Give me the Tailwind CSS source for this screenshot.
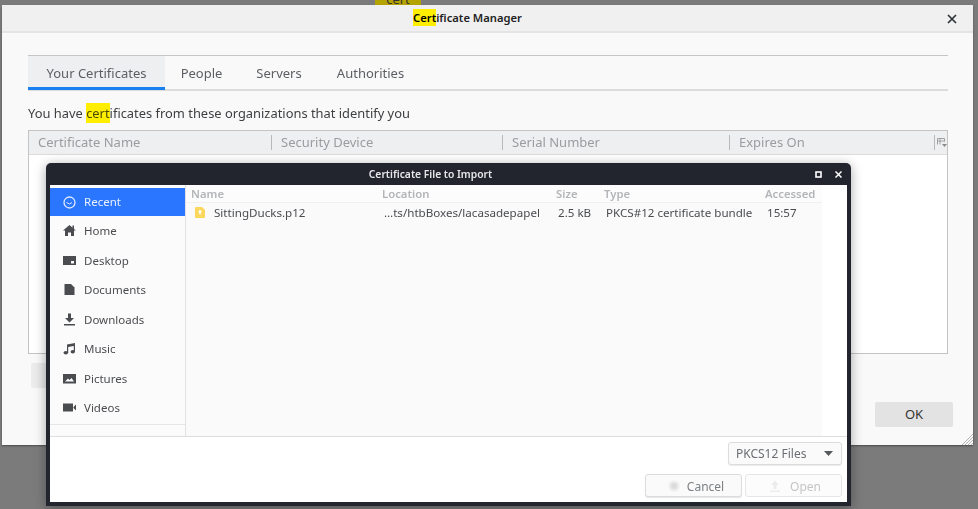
<!DOCTYPE html>
<html lang="en">
<head>
  <meta charset="UTF-8">
  <title>Certificate Manager</title>
  <script src="https://cdn.jsdelivr.net/npm/@tailwindcss/browser@4"></script>
</head>
<body class="relative w-[978px] h-[509px] overflow-hidden bg-[#7b7b7b] font-['Noto_Sans',sans-serif] text-[13px] text-[#3d3f42] blur-[0.35px]">
  <!-- window behind the manager -->
  <div class="absolute left-[375px] top-[-14px] w-[46px] h-[19px] bg-[#b5a400] text-center text-[#333] leading-[27px] overflow-hidden">cert</div>

  <!-- Certificate Manager -->
  <div class="absolute left-[2px] top-[5px] w-[971px] h-[440px] flex flex-col bg-[#f9f9f9] rounded-t-[3px] shadow-[0_1px_2px_rgba(0,0,0,0.4)]">
    <div class="relative h-[28px] shrink-0 flex items-center justify-center pr-[40px] bg-[#f0f0f0] border-b-2 border-[#e4e4e4] font-semibold text-[11.2px] text-[#222]">
      <span><span class="bg-[#ffee00] text-black py-[1px]">Cert</span>ificate Manager</span>
      <svg class="absolute right-[16px] top-[9px] w-[10px] h-[10px]" viewBox="0 0 10 10"><path d="M1 1l8 8M9 1l-8 8" stroke="#2e3436" stroke-width="1.7"/></svg>
    </div>
    <div class="flex-1 flex flex-col pt-[22px] pl-[26px] pr-[25px] relative">
      <div class="flex h-[36px] border-y border-y-[#c6c6c6] border-b-2 border-b-[#dcdcdc] text-[#5b5e63]">
        <div class="w-[137px] h-[34px] flex items-center justify-center pt-[5px] bg-[#eeeff1] border-b-[3px] border-[#1a7ff0]">Your Certificates</div>
        <div class="w-[74px] flex items-center justify-center pt-[3px] pl-[1px] ml-[-1px]">People</div>
        <div class="w-[82px] flex items-center justify-center pt-[3px]">Servers</div>
        <div class="w-[104px] flex items-center justify-center pt-[3px] pr-[1px] ml-[-1px]">Authorities</div>
      </div>
      <p class="mt-[13px] h-[18px] leading-[18px] text-[12.9px]">You have <span class="bg-[#ffee00] text-[#4a4a00] py-[1px]">cert</span>ificates from these organizations that identify you</p>
      <div class="mt-[8px] h-[224px] border border-[#c4c4c4] bg-white">
        <div class="flex h-[24px] items-center bg-[#eeeff0] border-b border-[#dcdcdc] text-[#9a9c9f]">
          <div class="w-[243px] h-[15px] flex items-center pl-[9px] border-r border-[#b8b8b8]">Certificate Name</div>
          <div class="w-[231px] h-[15px] flex items-center pl-[9px] border-r border-[#b8b8b8]">Security Device</div>
          <div class="w-[227px] h-[15px] flex items-center pl-[9px] border-r border-[#b8b8b8]">Serial Number</div>
          <div class="w-[205px] h-[15px] flex items-center pl-[9px] border-r border-[#b8b8b8]">Expires On</div>
          <svg class="ml-[2px] w-[10px] h-[9px]" viewBox="0 0 10 9"><path d="M.5 6.500v-6h7v3M.5 3h7M3 .5v6" fill="none" stroke="#a0a0a0"/><path d="M5 6h5L7.500 9z" fill="#8a8a8a"/></svg>
        </div>
      </div>
      <div class="flex justify-between mt-[9px] items-start">
        <div class="ml-[3px] w-[60px] h-[25px] bg-gradient-to-r from-[#ededed] to-[#d8d8d8] rounded-[2px]"></div>
      </div>
      <div class="absolute right-[20px] top-[369px] w-[78px] h-[25px] flex items-center justify-center bg-[#e3e3e3] rounded-[2px] text-[#333]">OK</div>
    </div>
    <svg class="absolute right-0 bottom-0 w-[11px] h-[11px]" viewBox="0 0 11 11"><path d="M0 11L11 0M3 11l8-8M6 11l5-5M9 11l2-2" stroke="#b5b5b5" stroke-width="1"/></svg>
  </div>

  <!-- File chooser dialog -->
  <div class="absolute left-[46px] top-[163px] w-[805px] h-[343px] flex flex-col bg-[#22252e] rounded-t-[5px] px-[4px] pb-[4px] shadow-[0_2px_12px_rgba(0,0,0,0.35)]">
    <div class="relative h-[22px] shrink-0 flex items-center justify-center pt-[1px] pr-[36px] text-[10.3px] font-semibold text-[#e6e7e9]">
      Certificate File to Import
      <svg class="absolute right-[25px] top-[8px] w-[7px] h-[7px]" viewBox="0 0 7 7"><rect x="1" y="1" width="5" height="5" fill="none" stroke="#fff" stroke-width="1.6"/></svg>
      <svg class="absolute right-[5px] top-[8px] w-[7px] h-[7px]" viewBox="0 0 7 7"><path d="M.5.5l6 6M6.500.5l-6 6" stroke="#fff" stroke-width="1.500"/></svg>
    </div>
    <div class="flex-1 flex flex-col bg-white">
      <div class="h-[252px] flex border-b border-[#dedede]">
        <!-- places sidebar -->
        <div class="w-[136px] shrink-0 flex flex-col bg-[#fbfbfb] border-r border-[#e2e2e2] text-[11.5px] text-[#4a4c50]">
          <div class="h-[240px] pt-[3px] border-b border-[#e6e6e6]">
            <div class="h-[28px] flex items-center gap-[8px] pl-[13px] bg-[#2a76ff] text-[#e8f0ff] w-[135px]">
              <svg class="w-[13px] h-[13px]" viewBox="0 0 13 13"><circle cx="6.500" cy="6.500" r="5.500" fill="none" stroke="#dfe9ff" stroke-width="1.300"/><path d="M3.500 6.500l3 1.500 2.500-1.500" fill="none" stroke="#dfe9ff"/></svg>
              Recent
            </div>
            <div class="h-[29.5px] flex items-center gap-[8px] pl-[13px]">
              <svg class="w-[13px] h-[13px]" viewBox="0 0 13 13"><path d="M6.500 1L9.500 3.700V1.500h1.500v3.500l2 1.500h-2V12H8V8.500H5V12H2V6.500H0z" fill="#4a4c50"/></svg>
              Home
            </div>
            <div class="h-[29.5px] flex items-center gap-[8px] pl-[13px]">
              <svg class="w-[13px] h-[13px]" viewBox="0 0 13 13"><path d="M0 2h13v9H0z M8 7v2.500h3V7z" fill="#4a4c50" fill-rule="evenodd"/></svg>
              Desktop
            </div>
            <div class="h-[29.5px] flex items-center gap-[8px] pl-[13px]">
              <svg class="w-[13px] h-[13px]" viewBox="0 0 13 13"><path d="M1.500 1h6.500l3.500 3.500V12h-10z" fill="#4a4c50"/></svg>
              Documents
            </div>
            <div class="h-[29.5px] flex items-center gap-[8px] pl-[13px]">
              <svg class="w-[13px] h-[13px]" viewBox="0 0 13 13"><path d="M5 .5h3V5h3L6.500 9.500 2 5h3zM1 11h11v1.500H1z" fill="#4a4c50"/></svg>
              Downloads
            </div>
            <div class="h-[29.5px] flex items-center gap-[8px] pl-[13px]">
              <svg class="w-[13px] h-[13px]" viewBox="0 0 13 13"><path d="M4 2.500L12 1v8.500h-1.200V4L5.200 5v6H4z" fill="#4a4c50"/><ellipse cx="2.800" cy="10.800" rx="2.300" ry="1.700" fill="#4a4c50"/><ellipse cx="9.800" cy="9.800" rx="2.200" ry="1.700" fill="#4a4c50"/></svg>
              Music
            </div>
            <div class="h-[29.5px] flex items-center gap-[8px] pl-[13px]">
              <svg class="w-[13px] h-[13px]" viewBox="0 0 13 13"><path d="M0 2h13v9.500H0z M2 9.500h9L8.500 6 6.500 8 5 6.500z" fill="#4a4c50" fill-rule="evenodd"/></svg>
              Pictures
            </div>
            <div class="h-[29.5px] flex items-center gap-[8px] pl-[13px]">
              <svg class="w-[13px] h-[13px]" viewBox="0 0 13 13"><path d="M0 2.500h10v8H0zM10.500 6L13 3.500v6L10.500 7z" fill="#4a4c50"/></svg>
              Videos
            </div>
          </div>
        </div>
        <!-- file list -->
        <div class="w-[636px] bg-[#fafafa] text-[11.6px]">
          <div class="flex h-[18px] pt-[1px] items-center bg-[#fcfcfc] border-b border-[#f0f0f0] text-[#b3b5b8] font-semibold text-[11.3px]">
            <div class="w-[196px] pl-[5px]">Name</div>
            <div class="w-[174px]">Location</div>
            <div class="w-[48px]">Size</div>
            <div class="w-[161px]">Type</div>
            <div>Accessed</div>
          </div>
          <div class="flex h-[20px] items-center text-[#4a4c50]">
            <div class="w-[198px] pl-[9px] flex items-center gap-[9px]">
              <svg class="w-[10px] h-[11px]" viewBox="0 0 10 11"><path d="M1 0h6l3 3v7a1 1 0 0 1-1 1H1a1 1 0 0 1-1-1V1a1 1 0 0 1 1-1z" fill="#fbd75b"/><circle cx="5" cy="4.500" r="1.500" fill="#fff"/><rect x="4.300" y="5" width="1.400" height="2.500" fill="#fff"/></svg>
              SittingDucks.p12
            </div>
            <div class="w-[174px]">…ts/htbBoxes/lacasadepapel</div>
            <div class="w-[48px]">2.5 kB</div>
            <div class="w-[161px]">PKCS#12 certificate bundle</div>
            <div>15:57</div>
          </div>
        </div>
      </div>
      <!-- filter and buttons -->
      <div class="flex-1 flex flex-col items-end pt-[5px] pr-[5px]">
        <div class="w-[114px] h-[23px] flex items-center justify-between pl-[7px] pr-[8px] border border-[#dcdcdc] rounded-[3px] bg-[#fafafa] text-[12px] text-[#6b6e73] shadow-[0_1px_1px_rgba(0,0,0,0.08)]">
          PKCS12 Files
          <svg class="w-[9px] h-[5px]" viewBox="0 0 9 5"><path d="M0 0h9L4.500 5z" fill="#55585c"/></svg>
        </div>
        <div class="flex gap-[3px] mt-[9px]">
          <div class="w-[97px] h-[23px] flex items-center justify-center gap-[7px] pt-[2px] pl-[5px] border border-[#dcdcdc] rounded-[3px] bg-[#fafafa] text-[12px] text-[#7d8084] shadow-[0_1px_1px_rgba(0,0,0,0.1)]">
            <svg class="w-[12px] h-[12px] mt-[-2px]" viewBox="0 0 12 12"><circle cx="6" cy="6" r="5.500" fill="#ececec"/><circle cx="6" cy="6" r="3" fill="#dcdcdc"/></svg>
            Cancel
          </div>
          <div class="w-[97px] h-[23px] flex items-center justify-center gap-[9px] pt-[2px] pl-[3px] border border-[#e6e6e6] rounded-[3px] bg-[#fcfcfc] text-[12px] text-[#c4c5c7]">
            <svg class="w-[12px] h-[12px] mt-[-2px]" viewBox="0 0 12 12"><path d="M6 .5L10 5H7.500v4h-3V5H2zM1 10.500h10V12H1z" fill="#ececec"/></svg>
            Open
          </div>
        </div>
      </div>
    </div>
  </div>
</body>
</html>
